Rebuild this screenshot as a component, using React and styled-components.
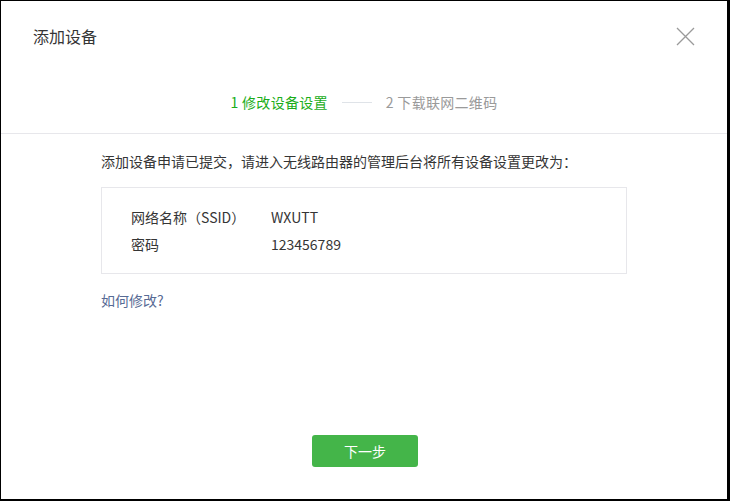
import React from 'react'
import styled, { createGlobalStyle } from 'styled-components'

const GlobalStyle = createGlobalStyle`
  html, body {
    margin: 0;
    padding: 0;
    background: #000;
  }
  body {
    font-family: "Microsoft YaHei", "Noto Sans CJK SC", "Liberation Sans", sans-serif;
    color: #353535;
  }
`

const Dialog = styled.div`
  box-sizing: border-box;
  margin: 1px 0 0 1px;
  width: 726px;
  height: 498px;
  background: #fff;
  display: flex;
  flex-direction: column;
`

const Header = styled.div`
  display: flex;
  align-items: center;
  justify-content: space-between;
  height: 70px;
  padding: 0 32px;
`

const Title = styled.h3`
  margin: 0;
  font-size: 16px;
  font-weight: 400;
  color: #353535;
`

const Close = styled.button`
  border: 0;
  background: none;
  padding: 0;
  width: 20px;
  height: 20px;
  cursor: pointer;
  display: flex;
  align-items: center;
  justify-content: center;
`

const Steps = styled.div`
  display: flex;
  align-items: center;
  justify-content: center;
  gap: 14px;
  height: 62px;
  padding-left: 0;
  border-bottom: 1px solid #e7e7eb;
  font-size: 14px;
`

const Step = styled.span`
  color: ${(p) => (p.$active ? '#1aad19' : '#9a9a9a')};
  letter-spacing: 0.3px;
`

const StepLine = styled.span`
  width: 30px;
  height: 1px;
  background: #dfe3e8;
`

const Body = styled.div`
  flex: 1;
  padding: 17px 100px 0 100px;
  display: flex;
  flex-direction: column;
`

const Lead = styled.p`
  margin: 0;
  font-size: 14px;
  line-height: 20px;
  color: #353535;
`

const InfoBox = styled.div`
  margin-top: 16px;
  border: 1px solid #e7e7eb;
  padding: 16px 29px;
  height: 87px;
  box-sizing: border-box;
`

const InfoRow = styled.div`
  display: grid;
  grid-template-columns: 140px 1fr;
  font-size: 14px;
  line-height: 27px;
  color: #353535;
`

const Link = styled.a`
  margin-top: 16px;
  font-size: 14px;
  line-height: 20px;
  color: #576b95;
  text-decoration: none;
  align-self: flex-start;
`

const Footer = styled.div`
  display: flex;
  justify-content: center;
  padding: 0 0 32px 0;
`

const Button = styled.button`
  width: 106px;
  height: 32px;
  border: 0;
  border-radius: 3px;
  background: #44b549;
  color: #fff;
  font-family: inherit;
  font-size: 14px;
  margin-left: 2px;
  cursor: pointer;
`

export default function App() {
  return (
    <>
      <GlobalStyle />
      <Dialog>
        <Header>
          <Title>添加设备</Title>
          <Close aria-label="close">
            <svg width="19" height="19" viewBox="0 0 19 19">
              <path d="M1 1 L18 18 M18 1 L1 18" stroke="#9a9a9a" strokeWidth="1.3" fill="none" />
            </svg>
          </Close>
        </Header>
        <Steps>
          <Step $active>1 修改设备设置</Step>
          <StepLine />
          <Step>2 下载联网二维码</Step>
        </Steps>
        <Body>
          <Lead>添加设备申请已提交，请进入无线路由器的管理后台将所有设备设置更改为：</Lead>
          <InfoBox>
            <InfoRow>
              <span>网络名称（SSID）</span>
              <span>WXUTT</span>
            </InfoRow>
            <InfoRow>
              <span>密码</span>
              <span>123456789</span>
            </InfoRow>
          </InfoBox>
          <Link href="#">如何修改?</Link>
        </Body>
        <Footer>
          <Button>下一步</Button>
        </Footer>
      </Dialog>
    </>
  )
}
